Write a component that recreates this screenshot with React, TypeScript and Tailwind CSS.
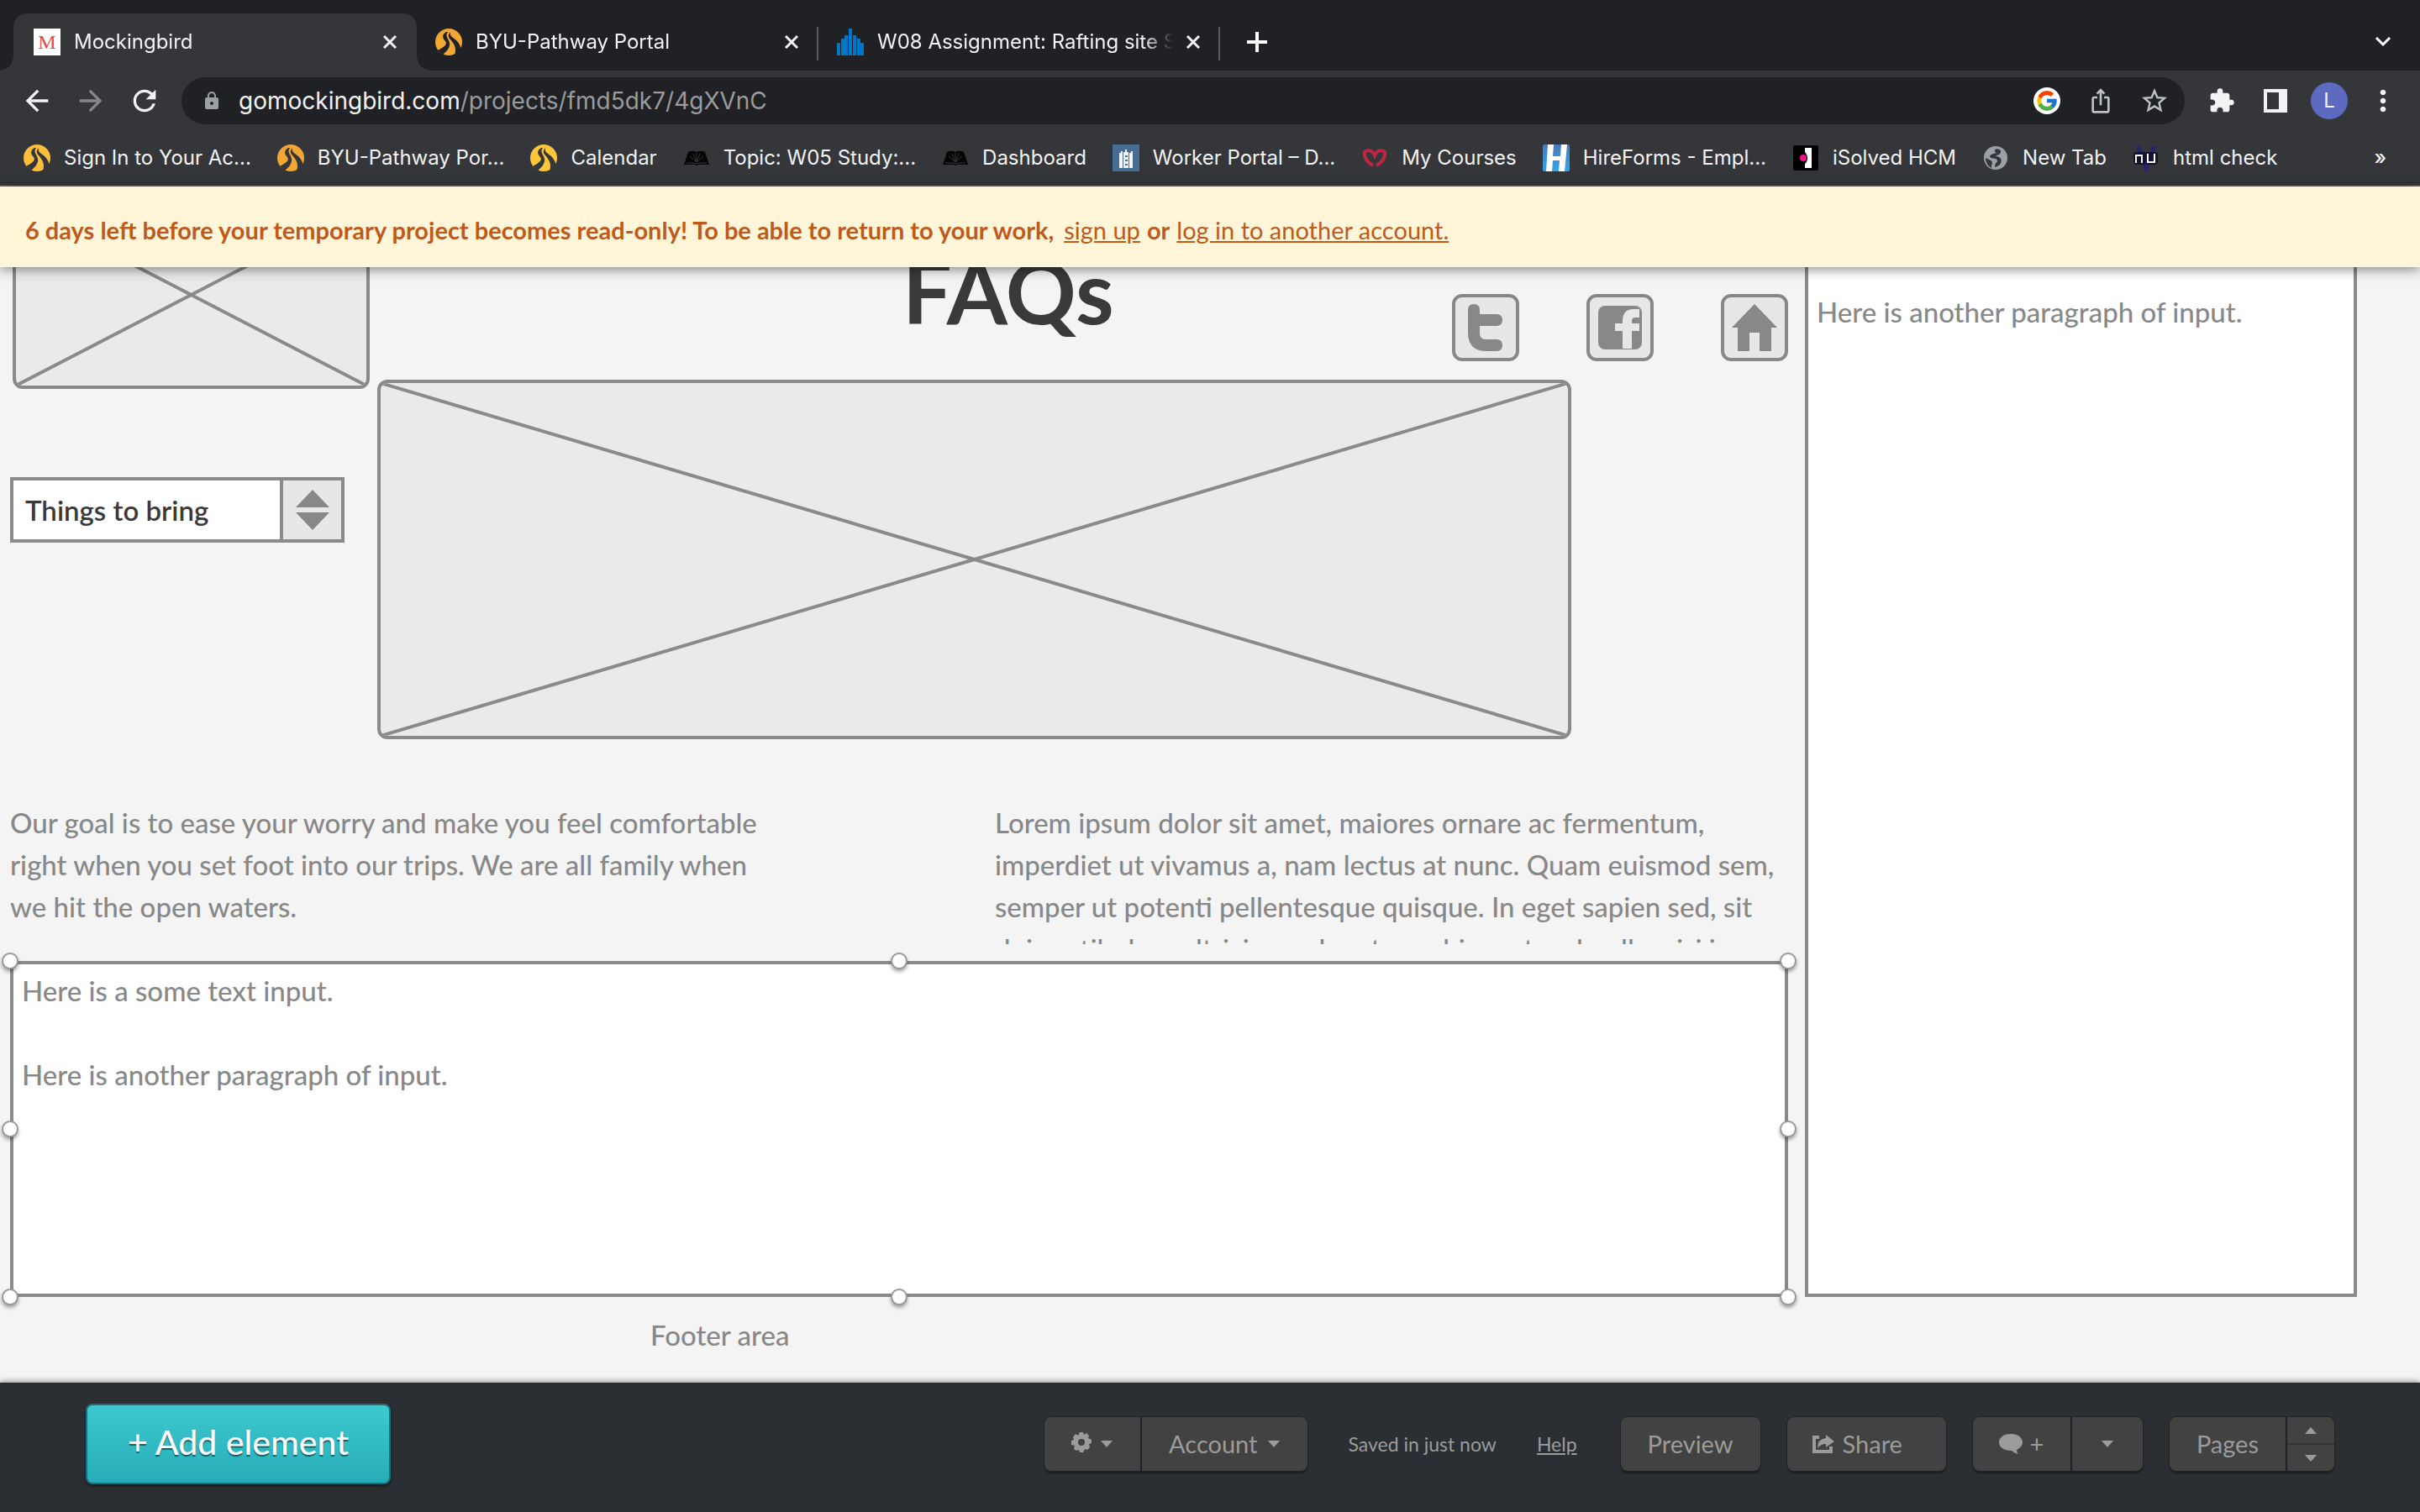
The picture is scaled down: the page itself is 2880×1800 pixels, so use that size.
import type { ReactNode } from "react";
import { FcGoogle } from "react-icons/fc";
import {
  MdArrowBack,
  MdArrowForward,
  MdExtension,
  MdLock,
  MdMoreVert,
  MdRefresh,
  MdStarBorder,
  MdIosShare,
} from "react-icons/md";

/* ---------- favicons ---------- */

function PathwayIcon({ color, road }: { color: string; road: string }) {
  return (
    <svg viewBox="0 0 32 32" className="size-8 shrink-0" aria-hidden="true">
      <circle cx="16" cy="16" r="16" fill={color} />
      <path d="M13 4C8 7 8 11 12 15C15 19 10 22 3 26L9 31C14 27 18 22 17 17C16 12 11 9 15 4Z" fill={road} />
      <path d="M18 4C16 9 22 11 26 15C29 18 30 22 31 25L23 32C26 22 22 18 18 13C15 10 15 7 18 4Z" fill={road} />
    </svg>
  );
}

function MockingbirdIcon() {
  return (
    <span
      aria-hidden="true"
      className="flex size-8 shrink-0 items-center justify-center bg-white font-['Liberation_Serif',serif] text-2xl leading-8 text-[#e8433d]"
    >
      M
    </span>
  );
}

function CanvasBarsIcon() {
  const bars = [
    [0, 17],
    [5, 12],
    [9, 8],
    [14, 0],
    [19, 8],
    [24, 12],
    [28, 17],
  ];
  return (
    <svg viewBox="0 0 32 32" className="size-8 shrink-0" aria-hidden="true">
      {bars.map(([x, y]) => (
        <rect key={x} x={x} y={y} width="4" height={32 - y} fill="#0076c6" />
      ))}
    </svg>
  );
}

function BookIcon() {
  return (
    <svg viewBox="0 0 32 32" className="size-8 shrink-0" aria-hidden="true">
      <path d="M6 9C10 7 14 8 16 9C18 8 22 7 26 9L31 24H18L16 25L14 24H1Z" fill="#050505" />
      <g stroke="#35363a" strokeWidth="1">
        <path d="M16 21V10M16 21L12 11M16 21L20 11M16 21L8 14M16 21L24 14" />
        <path d="M4 22H13L16 23L19 22H28" fill="none" />
      </g>
    </svg>
  );
}

function TowerIcon() {
  return (
    <svg viewBox="0 0 32 32" className="size-8 shrink-0" aria-hidden="true">
      <rect width="32" height="32" fill="#476d95" />
      <path d="M8 28V10H10V8H12V28ZM20 28V10H22V8H24V28ZM13 28V9H15V6H17V9H19V28Z" fill="#f2f5f7" />
      <path d="M15 14H18M15 19H18M15 24H18" stroke="#476d95" strokeWidth="2" />
    </svg>
  );
}

function HeartIcon() {
  return (
    <svg viewBox="0 0 32 32" className="size-8 shrink-0" aria-hidden="true">
      <path
        d="M14 25C7 21 3 16 4 9C9 5 14 8 16 13C18 8 23 5 28 9C29 16 25 21 18 25"
        fill="none"
        stroke="#bf2740"
        strokeWidth="4"
      />
    </svg>
  );
}

function HireFormsIcon() {
  return (
    <svg viewBox="0 0 32 32" className="size-8 shrink-0" aria-hidden="true">
      <defs>
        <linearGradient id="hire" x1="0" y1="0" x2="0" y2="1">
          <stop offset="0" stopColor="#4b79b8" />
          <stop offset="1" stopColor="#2fa9ea" />
        </linearGradient>
      </defs>
      <rect width="32" height="32" rx="2" fill="url(#hire)" />
      <path d="M6 0H13L12 14H21L22 0H29L26 32H19L20 19H12L11 32H4Z" fill="#fff" />
    </svg>
  );
}

function ISolvedIcon() {
  return (
    <svg viewBox="0 0 32 32" className="size-8 shrink-0" aria-hidden="true">
      <rect x="1" y="1" width="30" height="30" rx="2" fill="#000" />
      <path d="M15 4H23V28H15V23C19 20 19 13 15 9Z" fill="#fff" />
      <circle cx="13" cy="16" r="4" fill="#ee1587" />
    </svg>
  );
}

function GlobeIcon() {
  return (
    <svg viewBox="0 0 32 32" className="size-8 shrink-0" aria-hidden="true">
      <circle cx="16" cy="16" r="14" fill="#9aa0a6" />
      <path d="M18 5C14 6 14 9 17 10C13 11 9 12 9 15C12 18 18 15 18 20C17 22 15 23 15 27C21 26 24 21 22 17C21 14 17 15 16 13C20 13 23 10 22 7Z" fill="#35363a" />
      <path d="M4 16C8 18 12 19 12 22C11 24 11 26 11 28C7 26 4 21 4 16Z" fill="#35363a" />
    </svg>
  );
}

function NuIcon() {
  return (
    <svg viewBox="0 0 32 32" className="size-8 shrink-0" aria-hidden="true">
      <path d="M4 2H9L16 22L23 2H28L18 31H14Z" fill="#26246b" />
      <rect x="1" y="9" width="29" height="15" rx="4" fill="#0a0a2a" opacity="0.75" />
      <path d="M4 22V12M4 13H11V22M18 11V21H26M26 11V22" fill="none" stroke="#fff" strokeWidth="2" />
    </svg>
  );
}

/* ---------- browser chrome ---------- */

function CloseIcon() {
  return (
    <svg viewBox="0 0 16 16" className="size-4" aria-hidden="true">
      <path d="M1 1L15 15M15 1L1 15" stroke="#f1f3f4" strokeWidth="3" />
    </svg>
  );
}

function Tab({ icon, title, active, divider }: { icon: ReactNode; title: string; active?: boolean; divider?: boolean }) {
  return (
    <div
      className={
        active
          ? "relative flex h-17 w-[480px] items-center rounded-t-2xl bg-[#35363a] pr-4 pl-6"
          : "relative flex h-17 w-[478px] items-center pr-4 pl-[22px]"
      }
    >
      {active && (
        <>
          <span className="absolute bottom-0 -left-4 size-4 bg-[radial-gradient(circle_at_0_0,#202124_15px,#35363a_16px)]" />
          <span className="absolute -right-4 bottom-0 size-4 bg-[radial-gradient(circle_at_100%_0,#202124_15px,#35363a_16px)]" />
        </>
      )}
      {icon}
      <span className="ml-4 flex-1 overflow-hidden mask-r-from-90% text-2xl whitespace-nowrap text-[#f1f3f4]">{title}</span>
      <button aria-label={`Close ${title}`} className="ml-2 flex size-8 items-center justify-center">
        <CloseIcon />
      </button>
      {divider && <span className="absolute top-4 right-0 h-10 w-0.5 bg-[#5a5c60]" />}
    </div>
  );
}

function ToolButton({ label, children }: { label: string; children: ReactNode }) {
  return (
    <button aria-label={label} className="flex h-14 w-16 shrink-0 items-center justify-center">
      {children}
    </button>
  );
}

const bookmarks: { label: string; icon: ReactNode }[] = [
  { label: "Sign In to Your Ac...", icon: <PathwayIcon color="#fdbe3b" road="#35363a" /> },
  { label: "BYU-Pathway Por...", icon: <PathwayIcon color="#f2a733" road="#35363a" /> },
  { label: "Calendar", icon: <PathwayIcon color="#fdc739" road="#35363a" /> },
  { label: "Topic: W05 Study:...", icon: <BookIcon /> },
  { label: "Dashboard", icon: <BookIcon /> },
  { label: "Worker Portal – D...", icon: <TowerIcon /> },
  { label: "My Courses", icon: <HeartIcon /> },
  { label: "HireForms - Empl...", icon: <HireFormsIcon /> },
  { label: "iSolved HCM", icon: <ISolvedIcon /> },
  { label: "New Tab", icon: <GlobeIcon /> },
  { label: "html check", icon: <NuIcon /> },
];

function BrowserChrome() {
  return (
    <header className="bg-[#35363a] font-['Inter',sans-serif] text-[#f1f3f4]">
      <div className="flex h-21 items-end bg-[#202124] pl-4">
        <Tab active icon={<MockingbirdIcon />} title="Mockingbird" />
        <Tab divider icon={<PathwayIcon color="#f2a733" road="#202124" />} title="BYU-Pathway Portal" />
        <Tab divider icon={<CanvasBarsIcon />} title="W08 Assignment: Rafting site S" />
        <button aria-label="New tab" className="ml-7 flex h-17 w-8 items-center justify-center">
          <svg viewBox="0 0 24 24" className="size-6" aria-hidden="true">
            <path d="M12 0V24M0 12H24" stroke="#fff" strokeWidth="4" />
          </svg>
        </button>
        <button aria-label="Search tabs" className="mr-7 ml-auto flex h-17 w-8 items-center justify-center">
          <svg viewBox="0 0 20 12" className="h-3 w-5" aria-hidden="true">
            <path d="M2 1L10 9L18 1" fill="none" stroke="#fff" strokeWidth="3" />
          </svg>
        </button>
      </div>

      <div className="flex items-center px-3 py-2">
        <ToolButton label="Back">
          <MdArrowBack className="size-10" />
        </ToolButton>
        <ToolButton label="Forward">
          <MdArrowForward className="size-10 text-[#85878a]" />
        </ToolButton>
        <ToolButton label="Reload">
          <MdRefresh className="size-10" />
        </ToolButton>
        <div className="mx-3 flex h-14 flex-1 items-center rounded-full bg-[#202124] pr-1 pl-6">
          <MdLock className="mr-5 size-6 text-[#9aa0a6]" />
          <span className="flex-1 text-[28px] whitespace-nowrap">
            gomockingbird.com<span className="text-[#9a9b9d]">/projects/fmd5dk7/4gXVnC</span>
          </span>
          <ToolButton label="Search with Google">
            <span className="flex size-8 items-center justify-center rounded-full bg-white">
              <FcGoogle className="size-7" />
            </span>
          </ToolButton>
          <ToolButton label="Share this page">
            <MdIosShare className="size-8 text-[#bdc1c6]" />
          </ToolButton>
          <ToolButton label="Bookmark this tab">
            <MdStarBorder className="size-9 text-[#bdc1c6]" />
          </ToolButton>
        </div>
        <ToolButton label="Extensions">
          <MdExtension className="size-8" />
        </ToolButton>
        <ToolButton label="Side panel">
          <svg viewBox="0 0 28 28" className="size-7" aria-hidden="true">
            <path d="M0 0H28V28H0ZM4 4V24H18V4Z" fill="#f1f3f4" fillRule="evenodd" />
          </svg>
        </ToolButton>
        <ToolButton label="Profile">
          <span className="flex size-11 items-center justify-center rounded-full bg-[#5c6bc0] text-2xl">L</span>
        </ToolButton>
        <ToolButton label="Menu">
          <MdMoreVert className="size-10" />
        </ToolButton>
      </div>

      <nav
        aria-label="Bookmarks"
        className="flex h-[66px] items-center gap-[31px] border-b-2 border-[#5f6064] pl-7"
      >
        {bookmarks.map((b) => (
          <a key={b.label} href="#" className="flex items-center gap-4 text-2xl whitespace-nowrap">
            {b.icon}
            {b.label}
          </a>
        ))}
        <button aria-label="More bookmarks" className="mr-10 ml-auto text-2xl font-medium">
          »
        </button>
      </nav>
    </header>
  );
}

function Banner() {
  return (
    <div className="relative z-10 flex h-24 items-center gap-2 bg-[#fff6da] pt-2 pl-7.5 text-[29px] font-bold whitespace-nowrap text-[#bd5a1c] shadow-[0_2px_14px_rgba(0,0,0,0.5)]">
      <p className="mr-1">6 days left before your temporary project becomes read-only! To be able to return to your work,</p>
      <a href="#" className="font-normal underline">
        sign up
      </a>
      <span>or</span>
      <a href="#" className="font-normal underline">
        log in to another account.
      </a>
    </div>
  );
}

/* ---------- wireframe canvas ---------- */

function ImagePlaceholder({ className }: { className: string }) {
  return (
    <div className={`overflow-hidden rounded-xl border-4 border-[#8a8a8a] bg-[#eaeaea] ${className}`}>
      <svg className="size-full" viewBox="0 0 100 100" preserveAspectRatio="none" aria-hidden="true">
        <path
          d="M0 0L100 100M100 0L0 100"
          stroke="#8a8a8a"
          strokeWidth="4"
          vectorEffect="non-scaling-stroke"
        />
      </svg>
    </div>
  );
}

function IconBox({ label, className, children }: { label: string; className: string; children: ReactNode }) {
  return (
    <button aria-label={label} className={`size-20 rounded-xl border-4 border-[#888] bg-[#e7e7e7] ${className}`}>
      <svg viewBox="0 0 72 72" className="size-full" fill="#888" aria-hidden="true">
        {children}
      </svg>
    </button>
  );
}

function Handle({ className }: { className: string }) {
  return (
    <span
      className={`absolute size-5 -translate-x-1/2 -translate-y-1/2 rounded-full border-2 border-[#999] bg-white shadow-[0_3px_4px_rgba(0,0,0,0.35)] ${className}`}
    />
  );
}

const areaText = "Here is a some text input.\n\nHere is another paragraph of input.";

function Canvas() {
  return (
    <main className="relative flex-1 overflow-hidden bg-[#f4f4f4] text-[33px] leading-[50px] font-medium text-[#888]">
      <ImagePlaceholder className="absolute top-[-79px] left-[15px] h-56 w-[425px]" />
      <h1 className="absolute top-[-24px] left-[1074px] text-[104px] leading-none font-bold text-[#3a3a3a]">FAQs</h1>

      <IconBox label="Twitter" className="absolute top-8 left-[1728px]">
        <path d="M15 15Q15 8 22 8Q29 8 29 15V20H49Q56 20 56 27Q56 34 49 34H29V42Q29 50 36 50H49Q56 50 56 57Q56 64 49 64H37Q15 64 15 42Z" />
      </IconBox>
      <IconBox label="Facebook" className="absolute top-8 left-[1888px]">
        <rect x="10" y="10" width="52" height="52" rx="8" />
        <path d="M39 61V40H30V31H39V28Q39 14 52 14H59V24H54Q50 24 50 28V31H59V40H50V61Z" fill="#e7e7e7" />
      </IconBox>
      <IconBox label="Home" className="absolute top-8 left-[2048px]">
        <path d="M36 8L63 36H56V64H42V42H30V64H16V36H9Z" />
      </IconBox>

      <ImagePlaceholder className="absolute top-[134px] left-[449px] h-[428px] w-[1421px]" />

      <div className="absolute top-[250px] left-3 flex h-[78px] w-[398px] border-4 border-[#8a8a8a] bg-white">
        <select aria-label="Things to bring" className="flex-1 appearance-none pl-3.5 font-semibold text-[#3a3a3a]">
          <option>Things to bring</option>
        </select>
        <span className="pointer-events-none flex w-[73px] items-center justify-center border-l-4 border-[#8a8a8a] bg-[#e7e7e7]">
          <svg viewBox="0 0 40 48" className="h-12 w-10" fill="#888" aria-hidden="true">
            <path d="M20 0L40 21H0ZM0 27H40L20 48Z" />
          </svg>
        </span>
      </div>

      <p className="absolute top-[636px] left-3 w-[900px]">
        Our goal is to ease your worry and make you feel comfortable right when you set foot into our trips. We are all
        family when we hit the open waters.
      </p>
      <p className="absolute top-[636px] left-[1184px] h-[170px] w-[944px] overflow-hidden">
        Lorem ipsum dolor sit amet, maiores ornare ac fermentum, imperdiet ut vivamus a, nam lectus at nunc. Quam euismod
        sem, semper ut potenti pellentesque quisque. In eget sapien sed, sit dui vestibulum ultricies sed erat, morbi
        amet sed nulla wisi in.
      </p>

      <textarea
        aria-label="Side text area"
        defaultValue={areaText}
        className="absolute top-[-82px] left-[2148px] h-[1308px] w-[657px] resize-none border-4 border-[#8a8a8a] bg-white px-2.5 py-1.5"
      />

      <div className="absolute top-[826px] left-3 h-[400px] w-[2116px]">
        <textarea
          aria-label="Selected text area"
          defaultValue={areaText}
          className="block size-full resize-none border-4 border-[#8a8a8a] bg-white px-2.5 py-1.5"
        />
        <Handle className="top-0 left-0" />
        <Handle className="top-0 left-1/2" />
        <Handle className="top-0 left-full" />
        <Handle className="top-1/2 left-0" />
        <Handle className="top-1/2 left-full" />
        <Handle className="top-full left-0" />
        <Handle className="top-full left-1/2" />
        <Handle className="top-full left-full" />
      </div>

      <p className="absolute top-[1246px] left-[774px]">Footer area</p>
    </main>
  );
}

/* ---------- editor toolbar ---------- */

function Caret({ up }: { up?: boolean }) {
  return (
    <svg viewBox="0 0 16 9" className={up ? "h-2 w-4 rotate-180" : "h-2 w-4"} fill="currentColor" aria-hidden="true">
      <path d="M0 0H16L8 9Z" />
    </svg>
  );
}

function ButtonGroup({ children }: { children: ReactNode }) {
  return (
    <div className="flex h-16 divide-x-2 divide-[#1f2225] overflow-hidden rounded-lg bg-[#424242] shadow-[0_0_0_1px_#202326,0_3px_2px_#1a1d20]">
      {children}
    </div>
  );
}

function EditorBar() {
  return (
    <footer className="relative flex h-[154px] items-center bg-[#2b2f33] px-[102px] pb-2 text-[29px] text-[#9b9b9b] shadow-[0_-2px_6px_rgba(0,0,0,0.35)]">
      <button className="h-24 rounded-lg border-2 border-[#1f6f75] bg-linear-to-b from-[#3dc8cf] to-[#27adb8] px-12 pb-1 text-[41px] font-medium text-white shadow-[0_2px_3px_#15181a] text-shadow-[0_2px_1px_rgb(0_0_0/0.5)]">
        + Add element
      </button>

      <div className="ml-auto flex items-center gap-8">
        <ButtonGroup>
          <button aria-label="Settings" className="flex w-[116px] items-center justify-center gap-2.5">
            <svg viewBox="0 0 24 24" className="mb-1 size-6" fill="currentColor" aria-hidden="true">
              <path
                fillRule="evenodd"
                d="M10 0H14L15 3L18 1L21 4L20 7L24 9V13L21 14L22 18L19 21L16 20L14 24H10L9 21L6 22L3 20L4 16L0 15V10L3 9L2 6L5 2L8 4ZM12 8A4 4 0 1 0 12 16A4 4 0 1 0 12 8Z"
              />
            </svg>
            <Caret />
          </button>
          <button className="flex items-center gap-3 px-8">
            Account
            <Caret />
          </button>
        </ButtonGroup>
        <span className="mx-4 text-[23px]">Saved in just now</span>
        <a href="#" className="mr-5 text-[23px] underline">
          Help
        </a>
        <ButtonGroup>
          <button className="px-8">Preview</button>
        </ButtonGroup>
        <ButtonGroup>
          <button className="flex items-center gap-2.5 pr-13 pl-7.5">
            <svg viewBox="0 0 26 22" className="h-[22px] w-[26px]" aria-hidden="true">
              <path d="M8 3H2V20H22V14" fill="none" stroke="currentColor" strokeWidth="4" />
              <path d="M16 0L26 8L16 15V11Q10 11 6 16Q6 5 16 4Z" fill="currentColor" />
            </svg>
            Share
          </button>
        </ButtonGroup>
        <ButtonGroup>
          <button aria-label="Add comment" className="flex w-[118px] items-center justify-center gap-2">
            <svg viewBox="0 0 28 24" className="h-6 w-7" fill="currentColor" aria-hidden="true">
              <path d="M14 0C22 0 28 4 28 10C28 14 25 17 21 19Q21 22 23 24Q18 23 15 20C6 20 0 16 0 10C0 4 6 0 14 0Z" />
            </svg>
            +
          </button>
          <button aria-label="Comment options" className="flex w-[84px] items-center justify-center">
            <Caret />
          </button>
        </ButtonGroup>
        <ButtonGroup>
          <button className="px-8">Pages</button>
          <div className="flex w-14 flex-col divide-y-2 divide-[#333]">
            <button aria-label="Previous page" className="flex flex-1 items-center justify-center">
              <Caret up />
            </button>
            <button aria-label="Next page" className="flex flex-1 items-center justify-center">
              <Caret />
            </button>
          </div>
        </ButtonGroup>
      </div>
    </footer>
  );
}

export default function App() {
  return (
    <div className="flex min-h-screen flex-col bg-[#f4f4f4] font-['Lato',sans-serif]">
      <BrowserChrome />
      <Banner />
      <Canvas />
      <EditorBar />
    </div>
  );
}
